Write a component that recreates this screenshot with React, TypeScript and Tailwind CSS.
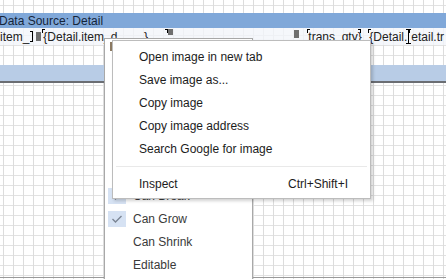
import React from "react";

const grid =
  "bg-white bg-[linear-gradient(to_right,#dcdcdc_1px,transparent_1px),linear-gradient(to_bottom,#e2e2e2_1px,transparent_1px)] bg-[size:10px_10px] bg-[position:3px_5px]";

const chromeItems = [
  "Open image in new tab",
  "Save image as...",
  "Copy image",
  "Copy image address",
  "Search Google for image",
];

const appItems = [
  { label: "Can Break", checked: true },
  { label: "Can Grow", checked: true },
  { label: "Can Shrink", checked: false },
  { label: "Editable", checked: false },
  { label: "", checked: true },
];

const Check = () => (
  <svg width="12" height="10" viewBox="0 0 12 10">
    <path d="M1.5 5 L4.5 8 L10.5 2" fill="none" stroke="#7b8594" strokeWidth="1.4" />
  </svg>
);

// field with bracket corners like the report designer draws them
const Field = ({ text, className }: { text: string; className?: string }) => (
  <div className={"relative h-[15px] flex items-center " + (className || "")}>
    <span className="absolute left-0 top-0 w-[3px] h-[4px] border-l border-t border-black" />
    <span className="absolute right-0 top-0 w-[3px] h-[4px] border-r border-t border-black" />
    <span className="whitespace-nowrap px-[1px]">{text}</span>
  </div>
);

const App = () => {
  return (
    <div
      className={"relative w-[446px] h-[279px] overflow-hidden " + grid}
      style={{ fontFamily: '"Liberation Sans", Arial, sans-serif' }}
    >
      {/* designer canvas */}
      <div className="flex flex-col h-[278px] border-b border-[#9a9a9a]">
        <div className="h-[13px]" />
        <div className="h-[15px] bg-[#80a8d9] flex items-center text-[12px] text-[#15253a] leading-none -ml-[1px]">
          Data Source: Detail
        </div>
        <div className="h-[17px] bg-[#f2f5fa]/80 flex items-center text-[12px] text-[#222] leading-none">
          <div className="relative h-[15px] flex items-center pr-[4px]">
            <span className="whitespace-nowrap">item_</span>
            <span className="absolute right-0 top-[2px] w-[3px] h-[11px] border-r border-b border-t border-black" />
          </div>
          <span className="w-[5px] h-[9px] bg-[#6f6f6f] ml-[3px]" />
          <div className="w-[126px] ml-[1px] overflow-hidden">
            <Field text="{Detail.item_d____}" className="w-[126px]" />
          </div>
          <span className="w-[5px] h-[6px] bg-[#6f6f6f] self-start mt-[1px]" />
          <div className="w-[126px] flex justify-end">
            <span className="w-[5px] h-[8px] bg-[#6f6f6f] mt-[-6px]" />
          </div>
          <Field text="trans_qty}" className="ml-[8px] w-[54px]" />
          <Field text="{Detail." className="ml-[7px] w-[42px]" />
          <span className="relative w-[5px] h-[15px] flex justify-center -ml-[4px]">
            <span className="w-[1px] h-full bg-black" />
            <span className="absolute top-0 w-[5px] h-[1px] bg-black" />
            <span className="absolute bottom-0 w-[5px] h-[1px] bg-black" />
          </span>
          <span className="whitespace-nowrap">etail.tr</span>
        </div>
        <div className="h-[20px]" />
        <div className="h-[16px] bg-[#b8cce6]" />
        <div className="h-[2px] bg-[#6b6e73]" />
        <div className="flex-1" />
      </div>

      {/* report designer popup menu, behind the browser menu */}
      <div className="absolute left-[104px] top-[38px] w-[149px] h-[270px] bg-white border border-[#a8a8a8] flex flex-col">
        <div className="h-[14px] flex items-start pl-[5px] pt-[3px]">
          <span className="w-[4px] h-[9px] bg-[#8c7a62]" />
        </div>
        <div className="h-[131px]" />
        <div className="flex flex-col text-[12px] text-[#3a3a3a]">
          {appItems.map((it, i) => (
            <div key={i} className="h-[23px] flex items-center">
              <div
                className={
                  "w-[18px] h-[16px] ml-[3px] flex items-center justify-center " +
                  (it.checked ? "bg-[#d6e2f3]" : "")
                }
              >
                {it.checked && <Check />}
              </div>
              <span className="ml-[7px]">{it.label}</span>
            </div>
          ))}
        </div>
      </div>

      {/* browser context menu */}
      <div className="absolute left-[112px] top-[40px] w-[259px] bg-white border border-[#bcbcbc] shadow-[2px_2px_3px_rgba(0,0,0,0.18)] pt-[4px] pb-[3px] text-[12px] text-[#1c1c1c]">
        {chromeItems.map((t) => (
          <div key={t} className="h-[23px] flex items-center pl-[26px]">
            {t}
          </div>
        ))}
        <div className="h-[1px] bg-[#e9e9e9] mx-[3px] mt-[6px] mb-[5px]" />
        <div className="h-[23px] flex items-center justify-between pl-[26px] pr-[22px]">
          <span>Inspect</span>
          <span>Ctrl+Shift+I</span>
        </div>
      </div>
    </div>
  );
};

export default App;
